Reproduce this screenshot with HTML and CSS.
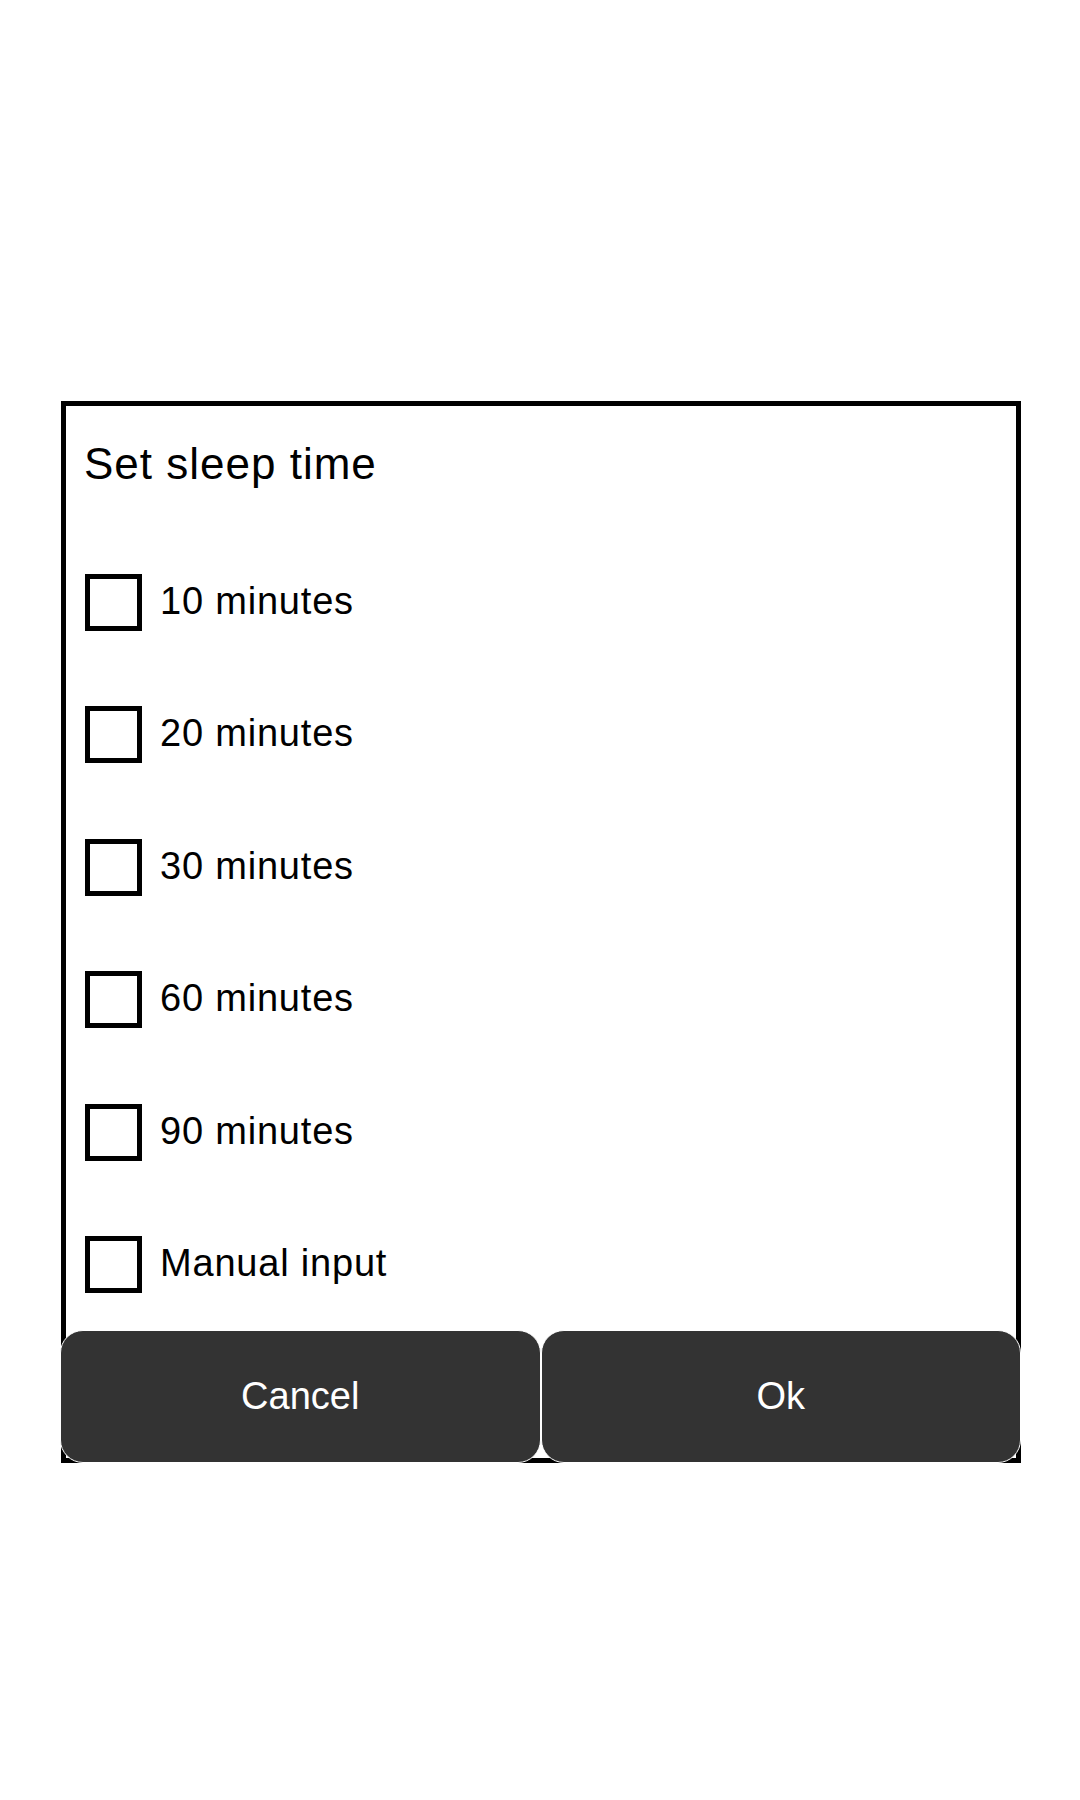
FILE: index.html
```html
<!DOCTYPE html>
<html lang="en">
<head>
<meta charset="utf-8">
<title>Set sleep time</title>
<link rel="stylesheet" href="styles.css">
</head>
<body>
<div class="page">
  <div class="dialog">
    <h1 class="title">Set sleep time</h1>
    <ul class="options">
      <li class="option"><span class="box"></span><span class="label">10 minutes</span></li>
      <li class="option"><span class="box"></span><span class="label">20 minutes</span></li>
      <li class="option"><span class="box"></span><span class="label">30 minutes</span></li>
      <li class="option"><span class="box"></span><span class="label">60 minutes</span></li>
      <li class="option"><span class="box"></span><span class="label">90 minutes</span></li>
      <li class="option"><span class="box"></span><span class="label">Manual input</span></li>
    </ul>
    <div class="actions">
      <button class="btn" type="button">Cancel</button>
      <button class="btn" type="button">Ok</button>
    </div>
  </div>
</div>
</body>
</html>
```
FILE: styles.css
```css
html, body {
  margin: 0;
  padding: 0;
  background: #ffffff;
}

body {
  font-family: "Liberation Sans", Arial, sans-serif;
  color: #000000;
}

.page {
  padding-top: 401px;
  padding-left: 61px;
}

.dialog {
  width: 960px;
  box-sizing: border-box;
  border: 5px solid #000000;
  background: #ffffff;
}

.title {
  margin: 0;
  padding: 36px 0 0 18px;
  font-size: 44px;
  line-height: 44px;
  font-weight: 400;
  letter-spacing: 1px;
}

.options {
  list-style: none;
  margin: 88px 0 0;
  padding: 0 0 0 19px;
  display: flex;
  flex-direction: column;
  gap: 75.4px;
}

.option {
  display: flex;
  align-items: flex-start;
  height: 57px;
}

.box {
  flex: none;
  width: 57px;
  height: 57px;
  box-sizing: border-box;
  border: 5px solid #000000;
}

.label {
  margin-left: 18px;
  font-size: 38px;
  line-height: 54px;
  letter-spacing: 0.8px;
}

.actions {
  display: flex;
  margin: 37px -5px -5px -6px;
}

.btn {
  flex: 1 1 0;
  height: 133px;
  box-sizing: border-box;
  padding: 0;
  border: 1px solid #ffffff;
  border-radius: 23px;
  background: #333333;
  color: #ffffff;
  font-family: "Liberation Sans", Arial, sans-serif;
  font-size: 38px;
  font-weight: 400;
}
```
